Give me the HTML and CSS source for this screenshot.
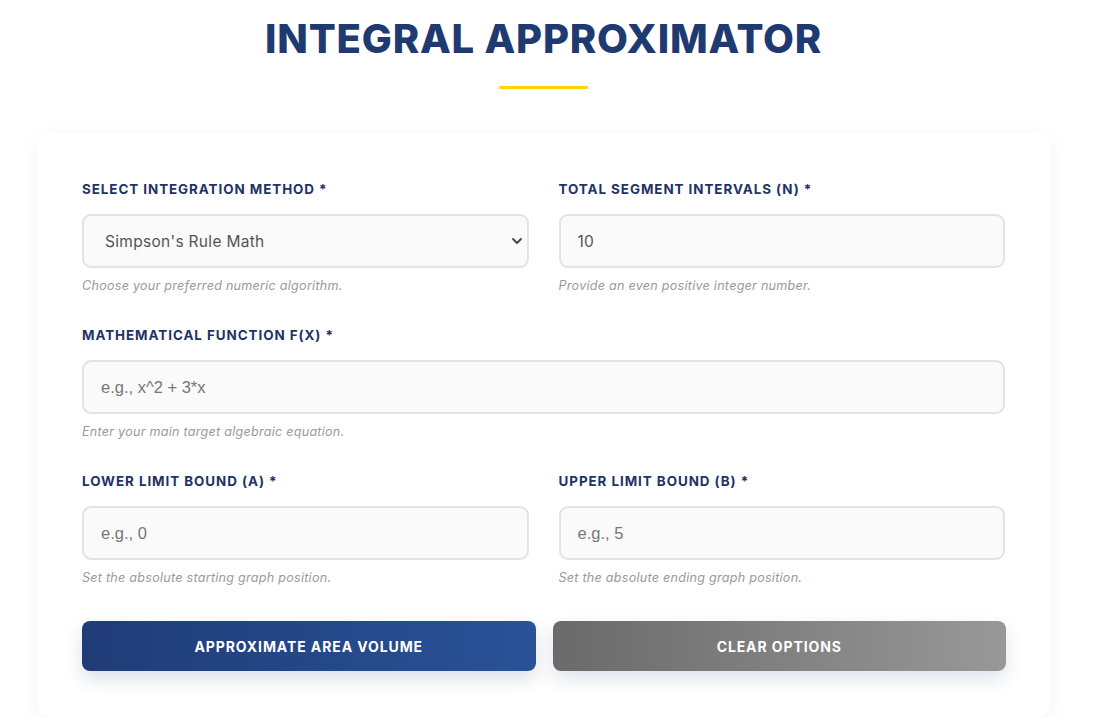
FILE: index.html
```html
<!DOCTYPE html>
<html lang="en">
<head>
<meta charset="utf-8">
<title>Integral Approximator</title>
<link rel="stylesheet" href="styles.css">
</head>
<body>
<div class="page">
  <header class="hero">
    <h1 class="title">INTEGRAL APPROXIMATOR</h1>
    <div class="underline"></div>
  </header>
  <form class="card">
    <div class="grid">
      <div class="field">
        <label class="label" for="method">SELECT INTEGRATION METHOD *</label>
        <div class="select-wrap">
          <select id="method" class="control select">
            <option>Simpson's Rule Math</option>
            <option>Trapezoidal Rule</option>
            <option>Midpoint Rule</option>
          </select>
          <svg class="chev" width="12" height="8" viewBox="0 0 12 8"><path d="M2 2 L6 6 L10 2" fill="none" stroke="#444" stroke-width="1.8" stroke-linecap="round" stroke-linejoin="round"/></svg>
        </div>
        <p class="hint">Choose your preferred numeric algorithm.</p>
      </div>
      <div class="field">
        <label class="label" for="n">TOTAL SEGMENT INTERVALS (N) *</label>
        <input id="n" class="control" type="text" value="10">
        <p class="hint">Provide an even positive integer number.</p>
      </div>
      <div class="field wide">
        <label class="label" for="fx">MATHEMATICAL FUNCTION F(X) *</label>
        <input id="fx" class="control" type="text" placeholder="e.g., x^2 + 3*x">
        <p class="hint">Enter your main target algebraic equation.</p>
      </div>
      <div class="field">
        <label class="label" for="a">LOWER LIMIT BOUND (A) *</label>
        <input id="a" class="control" type="text" placeholder="e.g., 0">
        <p class="hint">Set the absolute starting graph position.</p>
      </div>
      <div class="field">
        <label class="label" for="b">UPPER LIMIT BOUND (B) *</label>
        <input id="b" class="control" type="text" placeholder="e.g., 5">
        <p class="hint">Set the absolute ending graph position.</p>
      </div>
    </div>
    <div class="actions">
      <button type="button" class="btn btn-primary">APPROXIMATE AREA VOLUME</button>
      <button type="button" class="btn btn-secondary">CLEAR OPTIONS</button>
    </div>
  </form>
</div>
</body>
</html>
```
FILE: styles.css
```css
* { box-sizing: border-box; }
html, body { margin: 0; padding: 0; background: #ffffff; }
body {
  font-family: Inter, "Noto Sans", "DejaVu Sans", sans-serif;
  color: #333;
}
.page {
  width: 1087px;
  padding: 0 37px;
}
.hero {
  display: flex;
  flex-direction: column;
  align-items: center;
  padding-top: 13px;
}
.title {
  margin: 0;
  font-size: 40px;
  line-height: 52px;
  font-weight: 800;
  letter-spacing: 0.8px;
  color: #1e3a70;
}
.underline {
  width: 89px;
  height: 3px;
  border-radius: 2px;
  background: #ffd200;
  margin-top: 21px;
}
.card {
  margin-top: 44px;
  background: #fff;
  border-radius: 14px;
  box-shadow: 0 4px 22px rgba(0, 0, 0, 0.05);
  padding: 46px 45px 46px 45px;
}
.grid {
  display: grid;
  grid-template-columns: 1fr 1fr;
  column-gap: 30px;
  row-gap: 31px;
}
.field { display: flex; flex-direction: column; }
.field.wide { grid-column: 1 / -1; }
.label {
  display: block;
  font-size: 13.4px;
  line-height: 20px;
  font-weight: 700;
  letter-spacing: 0.95px;
  color: #1f3366;
  margin-bottom: 15px;
}
.control {
  width: 100%;
  height: 54px;
  border: 2px solid #e3e3e3;
  border-radius: 9px;
  background: #fafafa;
  padding: 0 17px;
  font-family: Inter, "Noto Sans", sans-serif;
  font-size: 15.5px;
  letter-spacing: 0.3px;
  color: #555;
  outline: none;
}
.control::placeholder {
  font-family: "Liberation Sans", Arial, sans-serif;
  font-size: 16.5px;
  letter-spacing: 0;
  color: #777;
}
.select-wrap { position: relative; }
.select {
  appearance: none;
  -webkit-appearance: none;
  padding-left: 21px;
}
.chev {
  position: absolute;
  right: 6px;
  top: 23px;
}
.hint {
  margin: 10px 0 0 0;
  font-size: 12.6px;
  line-height: 16px;
  font-style: italic;
  letter-spacing: 0.25px;
  color: #9a9a9a;
}
.actions {
  display: grid;
  grid-template-columns: 1fr 1fr;
  column-gap: 17px;
  margin-top: 35px;
  margin-right: -1px;
}
.btn {
  height: 50px;
  border: none;
  border-radius: 8px;
  color: #fff;
  font-family: Inter, "Noto Sans", sans-serif;
  font-size: 14px;
  font-weight: 700;
  letter-spacing: 0.9px;
  cursor: pointer;
}
.btn-primary {
  background: linear-gradient(90deg, #1f3c77 0%, #2a5298 100%);
  box-shadow: 0 8px 18px rgba(30, 60, 114, 0.16);
}
.btn-secondary {
  background: linear-gradient(90deg, #6a6a6a 0%, #989898 100%);
  box-shadow: 0 8px 18px rgba(30, 60, 114, 0.14);
}
```
